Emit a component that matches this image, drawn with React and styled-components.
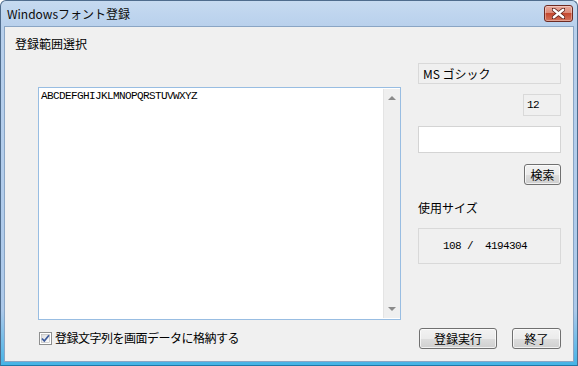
import styled, { createGlobalStyle } from 'styled-components'

const GlobalStyle = createGlobalStyle`
  html, body {
    margin: 0;
    padding: 0;
    background: #ffffff;
  }
  * {
    box-sizing: border-box;
  }
`

const UI_FONT = `'Noto Sans CJK JP', 'Noto Sans', sans-serif`
const MONO_FONT = `'Liberation Mono', 'DejaVu Sans Mono', 'Noto Sans CJK JP', monospace`

const Window = styled.div`
  display: flex;
  flex-direction: column;
  width: 578px;
  height: 366px;
  padding: 0 3px 3px;
  border: 1px solid #4f6c8d;
  border-bottom-color: #1d78a8;
  border-radius: 6px 6px 0 0;
  background: linear-gradient(to bottom, #c6daf0 0, #b8d0ec 26px, #acc9ea 85%, #45b3e6 100%);
  font-family: ${UI_FONT};
  font-size: 12px;
  color: #000;
`

const TitleBar = styled.div`
  display: flex;
  align-items: flex-start;
  justify-content: space-between;
  height: 25px;
  padding-left: 3px;
`

const Title = styled.div`
  margin-top: 5px;
  font-size: 12px;
  line-height: 15px;
  color: #0c0c0c;
`

const CloseButton = styled.div`
  display: flex;
  align-items: center;
  justify-content: center;
  width: 29px;
  height: 17px;
  margin-top: 4px;
  margin-right: 1px;
  border: 1px solid #6d2a22;
  border-radius: 3px;
  background: linear-gradient(to bottom, #e9a99c 0, #dc8a78 45%, #c5482f 50%, #d4735c 100%);
  box-shadow: inset 0 0 0 1px rgba(255, 255, 255, 0.35);
`

const Client = styled.div`
  display: flex;
  flex: 1;
  background: #f0f0f0;
  border: 1px solid #8aa5c4;
`

const LeftCol = styled.div`
  display: flex;
  flex-direction: column;
  flex: 1;
  padding: 10px 0 0 10px;
`

const Heading = styled.div`
  line-height: 14px;
`

const TextBox = styled.div`
  display: flex;
  width: 363px;
  height: 233px;
  margin: 36px 0 0 23px;
  background: #fff;
  border: 1px solid #98bde2;
`

const TextContent = styled.div`
  flex: 1;
  padding: 2px 0 0 2px;
  font-family: ${MONO_FONT};
  font-size: 11px;
  line-height: 13px;
  letter-spacing: -0.6px;
`

const ScrollBar = styled.div`
  display: flex;
  flex-direction: column;
  justify-content: space-between;
  align-items: center;
  width: 17px;
  padding: 7px 0 7px;
  margin: 1px 0;
  background: #efefef;
  border-left: 1px solid #e4e4e4;
`

const Arrow = styled.div`
  width: 0;
  height: 0;
  border-left: 4px solid transparent;
  border-right: 4px solid transparent;
  ${({ $down }) =>
    $down ? 'border-top: 4px solid #8a8a8a;' : 'border-bottom: 4px solid #8a8a8a;'}
`

const CheckRow = styled.label`
  display: flex;
  align-items: center;
  gap: 3px;
  margin: 11px 0 0 24px;
  line-height: 14px;
  letter-spacing: -0.5px;
`

const RightCol = styled.div`
  display: flex;
  flex-direction: column;
  width: 143px;
  margin-right: 12px;
  padding-top: 36px;
`

const ReadOnlyBox = styled.div`
  display: flex;
  align-items: ${({ $center }) => ($center ? 'center' : 'flex-start')};
  width: ${({ $w }) => ($w ? `${$w}px` : '100%')};
  height: ${({ $h }) => $h}px;
  margin-top: ${({ $mt }) => $mt || 0}px;
  align-self: ${({ $right }) => ($right ? 'flex-end' : 'stretch')};
  padding: ${({ $pad }) => $pad || '3px 0 0 4px'};
  background: #f0f0f0;
  border: 1px solid #d9d9d9;
  white-space: pre;
  font-family: ${({ $mono }) => ($mono ? MONO_FONT : UI_FONT)};
  font-size: ${({ $mono }) => ($mono ? '11px' : '12px')};
  letter-spacing: ${({ $mono }) => ($mono ? '-0.6px' : '0')};
  line-height: 14px;
`

const Input = styled.div`
  height: 27px;
  margin-top: 10px;
  background: #fff;
  border: 1px solid #d4d4d4;
`

const Button = styled.div`
  display: flex;
  align-items: center;
  justify-content: center;
  width: ${({ $w }) => $w}px;
  height: 21px;
  border: 1px solid #707070;
  border-radius: 3px;
  background: linear-gradient(to bottom, #f2f2f2 0, #ebebeb 50%, #dddddd 51%, #cfcfcf 100%);
  box-shadow: inset 0 0 0 1px rgba(255, 255, 255, 0.7);
  font-size: 12px;
  line-height: 14px;
`

const SearchButton = styled(Button)`
  align-self: flex-end;
  margin-top: 11px;
`

const SideLabel = styled.div`
  margin-top: 16px;
  line-height: 14px;
`

const ButtonRow = styled.div`
  display: flex;
  justify-content: space-between;
  margin-top: 64px;
  padding-left: 1px;
`

const CheckIcon = () => (
  <svg width="13" height="13" viewBox="0 0 13 13">
    <defs>
      <linearGradient id="cb" x1="0" y1="0" x2="1" y2="1">
        <stop offset="0" stopColor="#dcdcdc" />
        <stop offset="1" stopColor="#ffffff" />
      </linearGradient>
    </defs>
    <rect x="0.5" y="0.5" width="12" height="12" fill="#fff" stroke="#8e8f8f" />
    <rect x="2.5" y="2.5" width="8" height="8" fill="url(#cb)" stroke="#b5b5b5" strokeWidth="0.6" />
    <path d="M3 6.5 L5.3 9 L10 3.2" fill="none" stroke="#3c5a9c" strokeWidth="1.7" />
  </svg>
)

const CloseIcon = () => (
  <svg width="13" height="11" viewBox="0 0 13 11">
    <path
      d="M1.5 1.5 L11.5 9.5 M11.5 1.5 L1.5 9.5"
      stroke="#5a1f18"
      strokeWidth="4"
      strokeLinecap="round"
    />
    <path
      d="M1.8 1.8 L11.2 9.2 M11.2 1.8 L1.8 9.2"
      stroke="#ffffff"
      strokeWidth="2.4"
      strokeLinecap="round"
    />
  </svg>
)

const App = () => {
  return (
    <>
      <GlobalStyle />
      <Window>
        <TitleBar>
          <Title>Windowsフォント登録</Title>
          <CloseButton>
            <CloseIcon />
          </CloseButton>
        </TitleBar>
        <Client>
          <LeftCol>
            <Heading>登録範囲選択</Heading>
            <TextBox>
              <TextContent>ABCDEFGHIJKLMNOPQRSTUVWXYZ</TextContent>
              <ScrollBar>
                <Arrow />
                <Arrow $down />
              </ScrollBar>
            </TextBox>
            <CheckRow>
              <CheckIcon />
              登録文字列を画面データに格納する
            </CheckRow>
          </LeftCol>
          <RightCol>
            <ReadOnlyBox $h={21}>MS ゴシック</ReadOnlyBox>
            <ReadOnlyBox $h={22} $w={38} $mt={10} $right $mono $pad="3px 0 0 3px">
              12
            </ReadOnlyBox>
            <Input />
            <SearchButton $w={37}>検索</SearchButton>
            <SideLabel>使用サイズ</SideLabel>
            <ReadOnlyBox $h={36} $mt={13} $mono $center $pad="0 0 0 24px">
              108 /  4194304
            </ReadOnlyBox>
            <ButtonRow>
              <Button $w={78}>登録実行</Button>
              <Button $w={49}>終了</Button>
            </ButtonRow>
          </RightCol>
        </Client>
      </Window>
    </>
  )
}

export default App
